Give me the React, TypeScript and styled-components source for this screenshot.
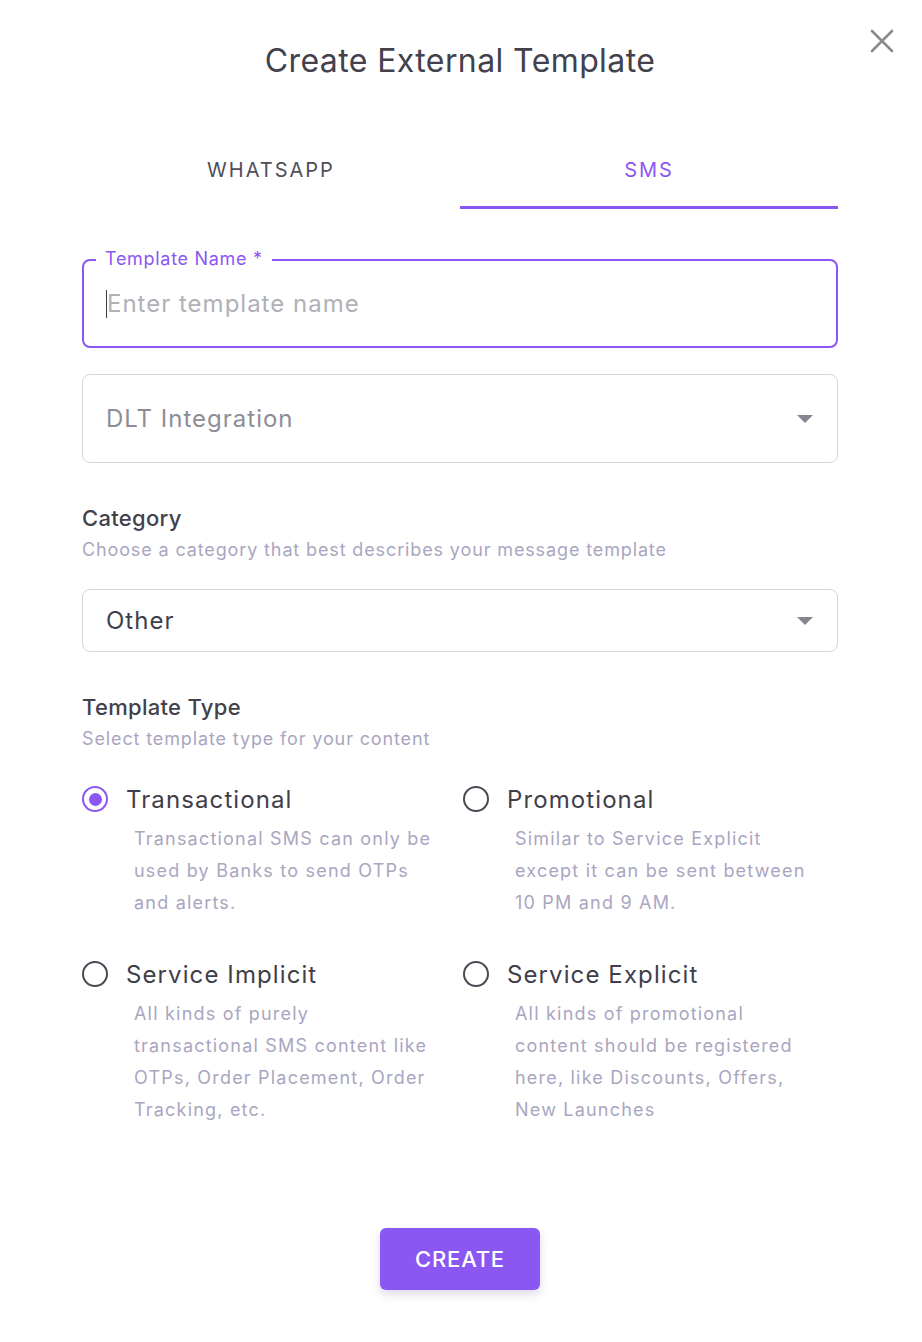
import { createGlobalStyle, styled } from "styled-components";

const GlobalStyle = createGlobalStyle`
  html, body {
    margin: 0;
    padding: 0;
    background: #ffffff;
  }
  body {
    font-family: Inter, "Noto Sans", "Liberation Sans", sans-serif;
    color: #3f3e4a;
  }
`;

const PURPLE = "#8b57f2";
const SUBTEXT = "#a9a6c1";

const S = {
  Modal: styled.div`
    position: relative;
    width: 922px;
    min-height: 1342px;
    box-sizing: border-box;
    padding: 40px 84px 0 82px;
    display: flex;
    flex-direction: column;
  `,
  Close: styled.button`
    position: absolute;
    top: 28px;
    right: 27px;
    width: 26px;
    height: 26px;
    padding: 0;
    border: none;
    background: none;
    cursor: pointer;
  `,
  Title: styled.h1`
    margin: 0;
    text-align: center;
    font-size: 32px;
    line-height: 42px;
    font-weight: 400;
    letter-spacing: 0.4px;
    color: #42414c;
  `,
  Tabs: styled.div`
    display: grid;
    grid-template-columns: 1fr 1fr;
    margin-top: 51px;
  `,
  Tab: styled.div<{ $active?: boolean }>`
    height: 76px;
    box-sizing: border-box;
    display: flex;
    align-items: center;
    justify-content: center;
    font-size: 20px;
    font-weight: 400;
    letter-spacing: 2px;
    text-transform: uppercase;
    color: ${p => (p.$active ? PURPLE : "#4f4e5a")};
    border-bottom: 3px solid ${p => (p.$active ? PURPLE : "transparent")};
  `,
  Field: styled.div`
    position: relative;
    margin-top: 50px;
    height: 89px;
    box-sizing: border-box;
    border: 2px solid ${PURPLE};
    border-radius: 8px;
    display: flex;
    align-items: center;
    padding: 0 22px;
  `,
  FloatLabel: styled.label`
    position: absolute;
    top: -13px;
    left: 12px;
    padding: 0 9px 0 9px;
    background: #ffffff;
    font-size: 18px;
    line-height: 22px;
    color: ${PURPLE};
    letter-spacing: 0.7px;
  `,
  Cursor: styled.span`
    width: 2px;
    height: 28px;
    background: #3f3e4a;
    flex-shrink: 0;
  `,
  Input: styled.input`
    flex: 1;
    border: none;
    outline: none;
    padding: 0;
    margin-left: -1px;
    font-family: inherit;
    font-size: 24px;
    letter-spacing: 1px;
    color: #3f3e4a;
    caret-color: transparent;
    &::placeholder {
      color: #b0b0b6;
    }
  `,
  Select: styled.div<{ $height: number; $muted?: boolean }>`
    height: ${p => p.$height}px;
    box-sizing: border-box;
    border: 1px solid #d6d6da;
    border-radius: 8px;
    display: flex;
    align-items: center;
    justify-content: space-between;
    padding: 0 24px 0 23px;
    font-size: 24px;
    letter-spacing: 1px;
    color: ${p => (p.$muted ? "#8e8d96" : "#3f3e4a")};
  `,
  Caret: styled.span`
    width: 0;
    height: 0;
    border-left: 8px solid transparent;
    border-right: 8px solid transparent;
    border-top: 8px solid #86858f;
  `,
  Section: styled.div<{ $top: number }>`
    margin-top: ${p => p.$top}px;
  `,
  Heading: styled.h2`
    margin: 0;
    font-size: 22px;
    line-height: 28px;
    font-weight: 500;
    letter-spacing: 0.3px;
    color: #42414c;
  `,
  Sub: styled.p`
    margin: 6px 0 0;
    font-size: 18px;
    line-height: 24px;
    letter-spacing: 0.87px;
    color: ${SUBTEXT};
  `,
  Options: styled.div`
    display: grid;
    grid-template-columns: 381px 1fr;
    row-gap: 39px;
    margin-top: 32px;
  `,
  Option: styled.div`
    display: flex;
    flex-direction: column;
  `,
  OptionHead: styled.div`
    display: flex;
    align-items: center;
    gap: 18px;
    height: 32px;
  `,
  Radio: styled.span<{ $checked?: boolean }>`
    width: 26px;
    height: 26px;
    box-sizing: border-box;
    border-radius: 50%;
    border: 2.5px solid ${p => (p.$checked ? PURPLE : "#4a4954")};
    display: flex;
    align-items: center;
    justify-content: center;
    flex-shrink: 0;
    &::after {
      content: "";
      display: ${p => (p.$checked ? "block" : "none")};
      width: 13px;
      height: 13px;
      border-radius: 50%;
      background: ${PURPLE};
    }
  `,
  OptionLabel: styled.span`
    font-size: 24px;
    letter-spacing: 1.1px;
    color: #3f3e4a;
  `,
  OptionDesc: styled.p`
    margin: 8px 0 0 52px;
    max-width: 299px;
    font-size: 18px;
    line-height: 32px;
    letter-spacing: 1.2px;
    color: ${SUBTEXT};
  `,
  Footer: styled.div`
    display: flex;
    justify-content: center;
    margin-top: 102px;
  `,
  CreateButton: styled.button`
    width: 160px;
    height: 62px;
    border: none;
    border-radius: 6px;
    background: ${PURPLE};
    color: #ffffff;
    font-family: inherit;
    font-size: 22px;
    font-weight: 500;
    letter-spacing: 0.8px;
    box-shadow: 0 4px 10px rgba(60, 40, 120, 0.18);
    cursor: pointer;
  `,
} as const;

const options = [
  {
    label: "Transactional",
    desc: "Transactional SMS can only be used by Banks to send OTPs and alerts.",
    checked: true,
  },
  {
    label: "Promotional",
    desc: "Similar to Service Explicit except it can be sent between 10 PM and 9 AM.",
  },
  {
    label: "Service Implicit",
    desc: "All kinds of purely transactional SMS content like OTPs, Order Placement, Order Tracking, etc.",
  },
  {
    label: "Service Explicit",
    desc: "All kinds of promotional content should be registered here, like Discounts, Offers, New Launches",
  },
];

const App: React.FC = () => {
  return <S.Modal>
    <GlobalStyle />
    <S.Close aria-label="Close">
      <svg width="26" height="26" viewBox="0 0 26 26">
        <path d="M3 3 L23 23 M23 3 L3 23" stroke="#8a8a90" strokeWidth="2.6" strokeLinecap="round" />
      </svg>
    </S.Close>
    <S.Title>Create External Template</S.Title>

    <S.Tabs>
      <S.Tab>WhatsApp</S.Tab>
      <S.Tab $active>SMS</S.Tab>
    </S.Tabs>

    <S.Field>
      <S.FloatLabel>Template Name *</S.FloatLabel>
      <S.Cursor />
      <S.Input placeholder="Enter template name" />
    </S.Field>

    <S.Section $top={26}>
      <S.Select $height={89} $muted>
        DLT Integration
        <S.Caret />
      </S.Select>
    </S.Section>

    <S.Section $top={41}>
      <S.Heading>Category</S.Heading>
      <S.Sub>Choose a category that best describes your message template</S.Sub>
    </S.Section>

    <S.Section $top={27}>
      <S.Select $height={63}>
        Other
        <S.Caret />
      </S.Select>
    </S.Section>

    <S.Section $top={41}>
      <S.Heading>Template Type</S.Heading>
      <S.Sub>Select template type for your content</S.Sub>
    </S.Section>

    <S.Options>
      {options.map(o => (
        <S.Option key={o.label}>
          <S.OptionHead>
            <S.Radio $checked={o.checked} />
            <S.OptionLabel>{o.label}</S.OptionLabel>
          </S.OptionHead>
          <S.OptionDesc>{o.desc}</S.OptionDesc>
        </S.Option>
      ))}
    </S.Options>

    <S.Footer>
      <S.CreateButton>CREATE</S.CreateButton>
    </S.Footer>
  </S.Modal>;
};

export default App;
